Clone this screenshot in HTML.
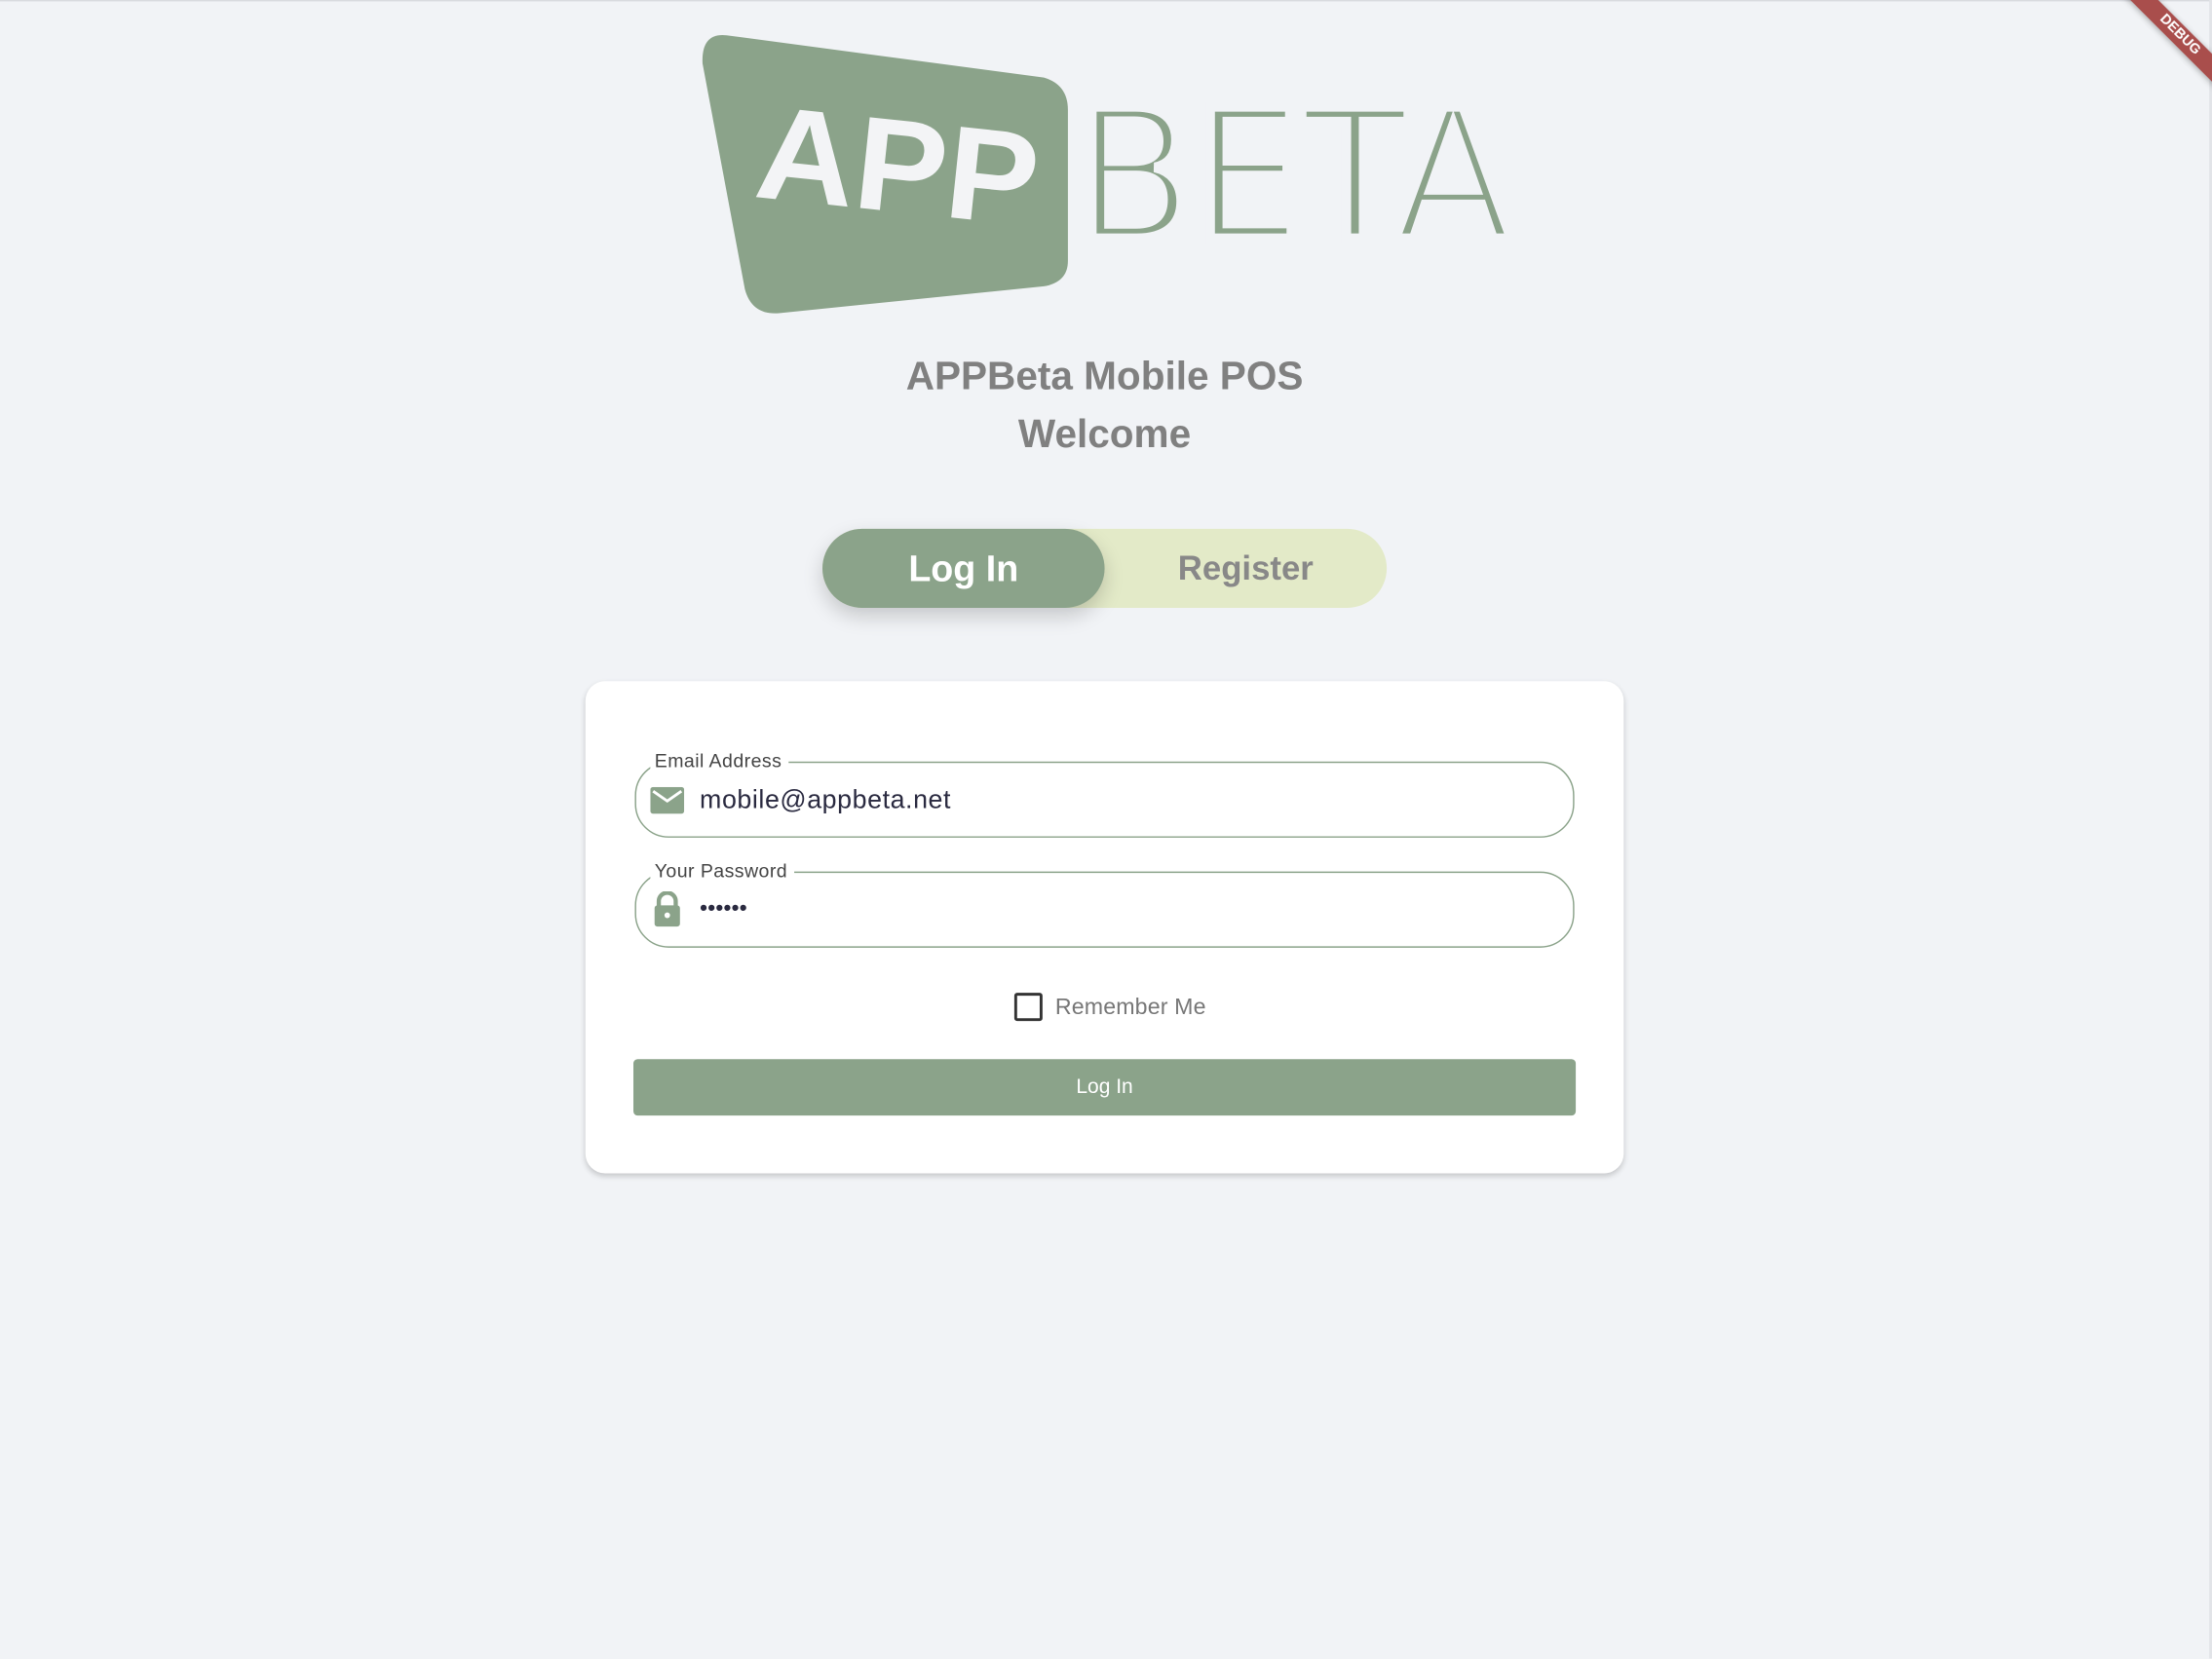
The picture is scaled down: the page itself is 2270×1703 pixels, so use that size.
<!DOCTYPE html>
<html><head><meta charset="utf-8"><style>
html,body{margin:0;padding:0;width:2270px;height:1702px;overflow:hidden;background:#f1f3f6;}
#root{position:absolute;left:0;top:0;width:1568px;height:1176px;transform:scale(1.44770);transform-origin:0 0;font-family:"Liberation Sans",sans-serif;}
.abs{position:absolute;}
.title{left:0;width:1566px;text-align:center;color:#808080;font-weight:bold;font-size:28px;}
.field{position:absolute;left:450px;width:666px;height:54px;border:1px solid #8ba38a;border-radius:24px;box-sizing:border-box;}
.lbl{position:absolute;left:10px;top:-9px;background:#fff;padding:0 5px 0 3px;font-size:13.5px;color:#444;letter-spacing:0.3px;}
</style></head><body>
<div id="root">
<div class="abs" style="left:0;top:0;width:1568px;height:1px;background:#d8dadf"></div>
<div class="abs" style="left:1566px;top:0;width:2px;height:1176px;background:#e2e4e8"></div>
<svg class="abs" style="left:0;top:0" width="1568" height="260">
<path d="M515,25 L740,55 Q757,60 757,78 L757,185 Q757,200 740,203 L553,222 Q533,224 528,205 L498,45 Q497,23 515,25 Z" fill="#8ba38a"/>
<text x="535" y="150" transform="rotate(6 635 130)" font-family="Liberation Sans,sans-serif" font-weight="bold" font-size="94" fill="#f3f4f6" textLength="200" lengthAdjust="spacingAndGlyphs">APP</text>
<text x="762" y="169" font-family="DejaVu Sans,sans-serif" font-size="128" fill="#8ba38a" stroke="#f1f3f6" stroke-width="7" textLength="310" lengthAdjust="spacingAndGlyphs">BETA</text>
</svg>
<div class="abs title" style="top:251px">APPBeta Mobile POS</div>
<div class="abs title" style="top:292px">Welcome</div>
<div class="abs" style="left:583px;top:375px;width:400px;height:56px;border-radius:28px;background:#e3eac8"></div>
<div class="abs" style="left:583px;top:375px;width:200px;height:56px;border-radius:28px;background:#8ba38a;box-shadow:0 6px 14px rgba(0,0,0,0.18);color:#fff;font-weight:bold;font-size:26px;line-height:56px;text-align:center">Log In</div>
<div class="abs" style="left:783px;top:377px;width:200px;height:56px;color:#888;font-weight:bold;font-size:24px;line-height:54px;text-align:center">Register</div>
<div class="abs" style="left:415px;top:483px;width:736px;height:349px;background:#fff;border-radius:14px;box-shadow:0 2px 4px rgba(0,0,0,0.18)">
</div>
<div class="field" style="top:540px"><span class="lbl">Email Address</span>
<svg class="abs" style="left:10px;top:17px" width="24" height="19"><rect x="0" y="0" width="24" height="19" rx="2" fill="#8ba38a"/><path d="M2,3 L12,10 L22,3" stroke="#fff" stroke-width="2" fill="none"/></svg>
<div class="abs" style="left:45px;top:15px;font-size:18.5px;color:#2a2a40;letter-spacing:0.4px">mobile@appbeta.net</div></div>
<div class="field" style="top:618px"><span class="lbl">Your Password</span>
<svg class="abs" style="left:12px;top:13px" width="20" height="26"><path d="M4,11 V7 A6,6 0 0 1 16,7 V11" stroke="#8ba38a" stroke-width="3" fill="none"/><rect x="1" y="10" width="18" height="15" rx="2" fill="#8ba38a"/><circle cx="10" cy="17" r="2" fill="#fff"/></svg>
<div class="abs" style="left:45px;top:17px;font-size:16px;color:#2a2a40;letter-spacing:0px">••••••</div></div>
<div class="abs" style="left:719px;top:704px;width:16px;height:16px;border:2px solid #333;border-radius:2px"></div>
<div class="abs" style="left:748px;top:706px;font-size:16px;color:#777;letter-spacing:0.1px">Remember Me</div>
<div class="abs" style="left:449px;top:751px;width:668px;height:40px;background:#8ba38a;border-radius:3px;color:#fff;font-size:14.5px;line-height:41px;text-align:center">Log In</div>
<div class="abs" style="left:1490px;top:18px;width:110px;height:14px;background:#a94e4c;transform:rotate(45deg);box-shadow:0 1px 4px rgba(0,0,0,0.3);color:#fff;font-weight:bold;font-size:10px;line-height:14px;text-align:center">DEBUG</div>
</div>
</body></html>
